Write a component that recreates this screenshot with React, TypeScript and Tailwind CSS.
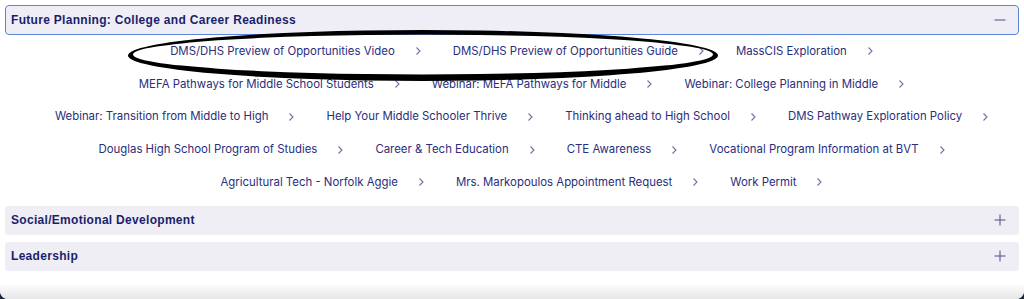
import React from "react";

const rows: string[][] = [
  ["DMS/DHS Preview of Opportunities Video", "DMS/DHS Preview of Opportunities Guide", "MassCIS Exploration"],
  ["MEFA Pathways for Middle School Students", "Webinar: MEFA Pathways for Middle", "Webinar: College Planning in Middle"],
  ["Webinar: Transition from Middle to High", "Help Your Middle Schooler Thrive", "Thinking ahead to High School", "DMS Pathway Exploration Policy"],
  ["Douglas High School Program of Studies", "Career & Tech Education", "CTE Awareness", "Vocational Program Information at BVT"],
  ["Agricultural Tech - Norfolk Aggie", "Mrs. Markopoulos Appointment Request", "Work Permit"],
];

const Chevron = () => (
  <svg width="7" height="10" viewBox="0 0 7 10" className="ml-[20px] shrink-0">
    <path d="M1.5 1.5 L5 5 L1.5 8.5" fill="none" stroke="#6e72a0" strokeWidth="1.1" />
  </svg>
);

const Minus = () => (
  <svg width="12" height="12" viewBox="0 0 12 12">
    <path d="M0.5 6 H11.5" stroke="#777ca6" strokeWidth="1.4" />
  </svg>
);

const Plus = () => (
  <svg width="12" height="12" viewBox="0 0 12 12">
    <path d="M0.5 6 H11.5 M6 0.5 V11.5" stroke="#4a4f8a" strokeWidth="1" />
  </svg>
);

const title = "font-['Liberation_Sans',Arial,sans-serif] text-[12px] font-bold tracking-[0.3px] text-[#1b1f6b]";

// hand-drawn marker loop: outer and inner ellipse, thicker at the bottom
const loop =
  "M128 55.5 A295 25.5 0 1 0 718 55.5 A295 25.5 0 1 0 128 55.5 Z " +
  "M133 54.5 A290 20 0 1 0 713 54.5 A290 20 0 1 0 133 54.5 Z";

const App = () => {
  return (
    <div className="relative h-[299px] w-[1024px] overflow-hidden bg-[#1c2a3a]">
      <div className="flex h-full flex-col rounded-b-[8px] bg-white">
        <div className="px-[5px] pt-[5px]">
          <div className="flex h-[30px] items-center justify-between rounded-[4px] border border-[#5a86d8] bg-[#efeef6] pl-[5px] pr-[12px]">
            <span className={title}>Future Planning: College and Career Readiness</span>
            <Minus />
          </div>
        </div>

        <div className="flex flex-col pl-[20px] font-['Inter',sans-serif] text-[11.4px] text-[#2a2e7c]">
          {rows.map((row, i) => (
            <ul key={i} className="flex h-[32.75px] items-center justify-center">
              {row.map((l) => (
                <li key={l} className="flex items-center px-[15.5px]">
                  <span>{l}</span>
                  <Chevron />
                </li>
              ))}
            </ul>
          ))}
        </div>

        <div className="flex flex-col gap-[7px] px-[5px] pt-[7px]">
          {["Social/Emotional Development", "Leadership"].map((s) => (
            <div key={s} className="flex h-[29px] items-center justify-between rounded-[3px] bg-[#efeef5] pl-[6px] pr-[13px]">
              <span className={title}>{s}</span>
              <Plus />
            </div>
          ))}
        </div>

        <div className="mt-auto h-[16px] rounded-b-[8px] bg-gradient-to-b from-white to-[#e6e6e8]" />
      </div>

      <svg className="pointer-events-none absolute left-0 top-0" width="1024" height="299">
        <path d={loop} fill="#000" fillRule="evenodd" />
      </svg>
    </div>
  );
};

export default App;
